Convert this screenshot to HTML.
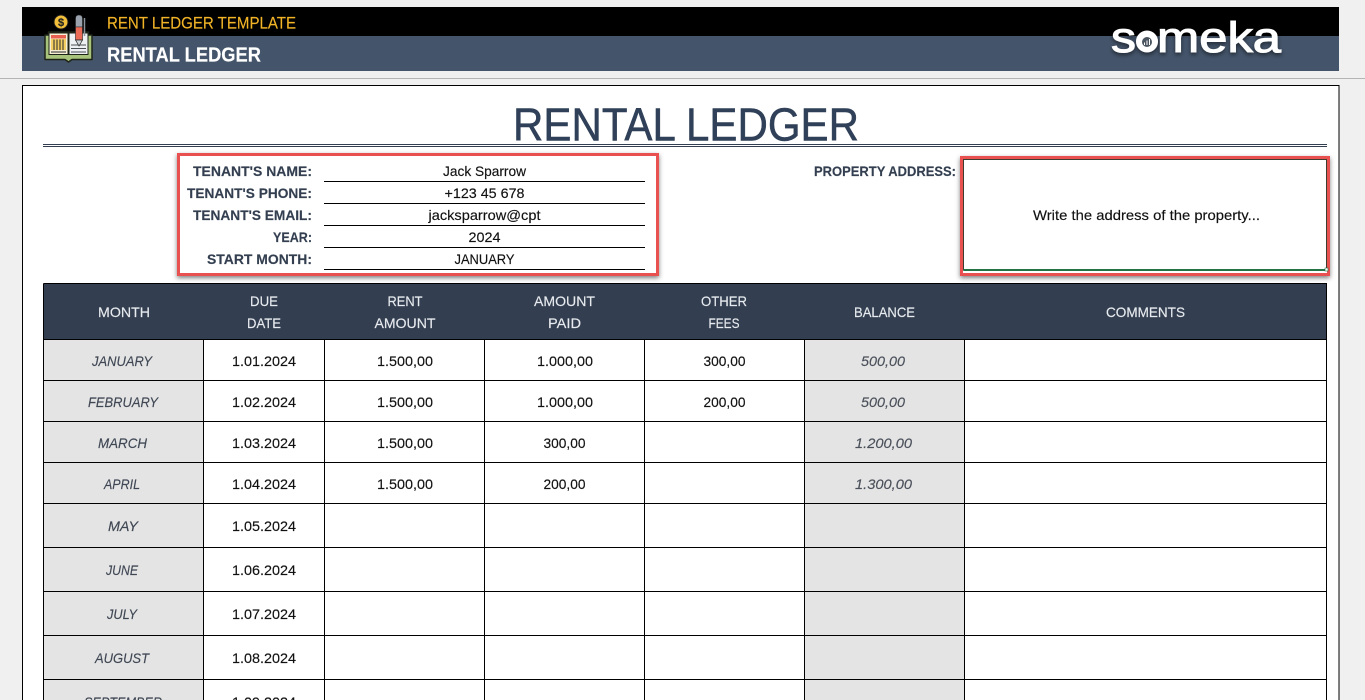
<!DOCTYPE html>
<html lang="en">
<head>
<meta charset="utf-8">
<title>Rental Ledger</title>
<style>
html,body{margin:0;padding:0;width:1365px;height:700px;overflow:hidden;background:#f0f0f0}
svg{display:block}
text{font-family:"Liberation Sans",sans-serif;font-size:14px;fill:#111;stroke:#111;stroke-width:.15px}
.m{text-anchor:middle}
.h{text-anchor:middle;fill:#e8ebef;stroke:#e8ebef;font-size:14px}
.mo{text-anchor:middle;font-style:italic;fill:#3f4754;stroke:#3f4754}
.b{text-anchor:middle;font-style:italic;fill:#4a505a;stroke:#4a505a}
.l{font-weight:bold;fill:#333f50;stroke:#333f50;font-size:14px}
</style>
</head>
<body>
<svg width="1365" height="700" viewBox="0 0 1365 700" xmlns="http://www.w3.org/2000/svg">
<defs>
<filter id="sh" x="-5%" y="-15%" width="110%" height="130%"><feDropShadow dx="0" dy="2" stdDeviation="2.500" flood-color="#000" flood-opacity=".5"/></filter>
<filter id="ls" x="-10%" y="-30%" width="120%" height="170%"><feDropShadow dx="0" dy="2" stdDeviation="2" flood-color="#000" flood-opacity=".55"/></filter>
</defs>
<rect width="1365" height="700" fill="#f0f0f0"/>

<!-- Header band -->
<rect x="22" y="7" width="1317" height="29" fill="#000"/>
<rect x="22" y="36" width="1317" height="35" fill="#44546a"/>
<rect x="0" y="78" width="1365" height="1" fill="#b4b4b4"/>
<text x="107" y="28.500" textLength="189" lengthAdjust="spacingAndGlyphs" style="font-size:17px;fill:#f2b427;stroke:#f2b427">RENT LEDGER TEMPLATE</text>
<text x="107" y="61.500" textLength="154" lengthAdjust="spacingAndGlyphs" style="font-size:20px;font-weight:bold;fill:#fff;stroke:#fff">RENTAL LEDGER</text>

<!-- Book icon -->
<g>
<path d="M45 35H48.500V32H88.500V35H92V59.500H72L68.500 62 65 59.500H45Z" fill="#a8c47c" stroke="#1e2418" stroke-width="1.500" stroke-linejoin="round"/>
<rect x="49" y="33" width="19" height="21.500" fill="#f6efd6" stroke="#1e2418" stroke-width="1"/>
<rect x="69" y="33" width="19" height="21.500" fill="#eef1f3" stroke="#1e2418" stroke-width="1"/>
<rect x="51" y="35" width="15" height="3.500" fill="#e8604f"/>
<rect x="51" y="39" width="15" height="11" fill="#f3cf63"/>
<path d="M54 39.500V50M57 39.500V50M60 39.500V50M63 39.500V50M51 52H66" stroke="#2a2a2a" stroke-width="1"/>
<path d="M71 45H86M71 48.500H86M71 52H86" stroke="#4a4f55" stroke-width="1"/>
<circle cx="61" cy="22" r="7" fill="#f3bf3a" stroke="#1b1b1b" stroke-width="1"/>
<text x="61" y="26" class="m" style="font-size:11px;font-weight:bold;fill:#222;stroke:#222">$</text>
<path d="M75.500 18.500Q75.500 15 79 15Q82.500 15 82.500 18.500V27H75.500Z" fill="#9aa3ad" stroke="#222" stroke-width=".6"/>
<path d="M75.500 27H82.500V40H75.500Z" fill="#ea6a56" stroke="#222" stroke-width=".6"/>
<path d="M75.500 40H82.500L79 46Z" fill="#cfd4d8" stroke="#222" stroke-width=".7"/>
<path d="M84.500 18V36" stroke="#8a929b" stroke-width="1.500"/>
</g>

<!-- Someka logo -->
<g filter="url(#ls)">
<text x="1111" y="52" textLength="25" lengthAdjust="spacingAndGlyphs" style="font-size:43px;fill:#fff;stroke:#fff;stroke-width:1px">s</text>
<circle cx="1147" cy="41.500" r="11" fill="#fff"/>
<text x="1157" y="52" textLength="124" lengthAdjust="spacingAndGlyphs" style="font-size:43px;fill:#fff;stroke:#fff;stroke-width:1px">meka</text>
</g>
<circle cx="1147" cy="42" r="5" fill="#4a5560"/>
<path d="M1144.500 45V42.500M1147 45V40.500M1149.500 45V39" stroke="#fff" stroke-width="1"/>

<!-- Sheet -->
<rect x="22.500" y="85.500" width="1316.500" height="640" fill="#fff" stroke="#000" stroke-width="1"/>
<text x="513" y="140.500" textLength="346" lengthAdjust="spacingAndGlyphs" style="font-size:46px;fill:#2f4058;stroke:#2f4058;stroke-width:.5px">RENTAL LEDGER</text>
<rect x="43" y="144" width="1284" height="1" fill="#333f50"/>
<rect x="43" y="146" width="1284" height="1" fill="#333f50"/>

<!-- Tenant form -->
<rect x="178.500" y="154.500" width="479" height="120" fill="#fff" stroke="#e8514f" stroke-width="3" filter="url(#sh)"/>
<text x="193" y="176" textLength="119" lengthAdjust="spacingAndGlyphs" class="l">TENANT'S NAME:</text>
<text x="187" y="198" textLength="125" lengthAdjust="spacingAndGlyphs" class="l">TENANT'S PHONE:</text>
<text x="193" y="220" textLength="119" lengthAdjust="spacingAndGlyphs" class="l">TENANT'S EMAIL:</text>
<text x="273" y="242" textLength="39" lengthAdjust="spacingAndGlyphs" class="l">YEAR:</text>
<text x="207" y="264" textLength="105" lengthAdjust="spacingAndGlyphs" class="l">START MONTH:</text>
<path d="M324 181.500H645M324 203.500H645M324 225.500H645M324 247.500H645M324 269.500H645" stroke="#000" stroke-width="1"/>
<text x="484.500" y="176" class="m" textLength="83" lengthAdjust="spacingAndGlyphs">Jack Sparrow</text>
<text x="484.500" y="198" class="m" textLength="80" lengthAdjust="spacingAndGlyphs">+123 45 678</text>
<text x="484.500" y="220" class="m" textLength="112" lengthAdjust="spacingAndGlyphs">jacksparrow@cpt</text>
<text x="484.500" y="242" class="m" textLength="32" lengthAdjust="spacingAndGlyphs">2024</text>
<text x="484.500" y="264" class="m" textLength="60" lengthAdjust="spacingAndGlyphs">JANUARY</text>

<!-- Property address -->
<text x="814" y="176" textLength="142" lengthAdjust="spacingAndGlyphs" class="l">PROPERTY ADDRESS:</text>
<rect x="961.500" y="157.500" width="367" height="117" fill="#fff" stroke="#e8514f" stroke-width="3" filter="url(#sh)"/>
<rect x="963.500" y="159.500" width="363" height="110.500" fill="#fff" stroke="#3d3d2f" stroke-width="1"/>
<rect x="963.500" y="269" width="364" height="2" fill="#217346"/>
<rect x="1325" y="268" width="3" height="3" fill="#fff" stroke="#217346" stroke-width=".6"/>
<text x="1146.500" y="220" class="m" textLength="227" lengthAdjust="spacingAndGlyphs">Write the address of the property...</text>

<!-- Table -->
<rect x="43" y="284" width="1284" height="56" fill="#333f50"/>
<rect x="43" y="340" width="160" height="360" fill="#e4e4e4"/>
<rect x="804" y="340" width="160" height="360" fill="#e4e4e4"/>
<path d="M43.500 283.500H1326.500V700M43.500 283.500V700" fill="none" stroke="#000" stroke-width="1"/>
<path d="M43 339.500H1327M43 380.500H1327M43 421.500H1327M43 462.500H1327M43 503.500H1327M43 547.500H1327M43 591.500H1327M43 635.500H1327M43 679.500H1327" stroke="#000" stroke-width="1"/>
<path d="M203.500 340V700M324.500 340V700M484.500 340V700M644.500 340V700M804.500 340V700M964.500 340V700" stroke="#000" stroke-width="1"/>

<text x="124" y="317" class="h" textLength="52" lengthAdjust="spacingAndGlyphs">MONTH</text>
<text x="264" y="306" class="h" textLength="28" lengthAdjust="spacingAndGlyphs">DUE</text>
<text x="264" y="328" class="h" textLength="34" lengthAdjust="spacingAndGlyphs">DATE</text>
<text x="405" y="306" class="h" textLength="35" lengthAdjust="spacingAndGlyphs">RENT</text>
<text x="405" y="328" class="h" textLength="61" lengthAdjust="spacingAndGlyphs">AMOUNT</text>
<text x="564.500" y="306" class="h" textLength="61" lengthAdjust="spacingAndGlyphs">AMOUNT</text>
<text x="564.500" y="328" class="h" textLength="33" lengthAdjust="spacingAndGlyphs">PAID</text>
<text x="724" y="306" class="h" textLength="46" lengthAdjust="spacingAndGlyphs">OTHER</text>
<text x="724" y="328" class="h" textLength="31" lengthAdjust="spacingAndGlyphs">FEES</text>
<text x="884.500" y="317" class="h" textLength="61" lengthAdjust="spacingAndGlyphs">BALANCE</text>
<text x="1145.500" y="317" class="h" textLength="79" lengthAdjust="spacingAndGlyphs">COMMENTS</text>

<text x="122" y="366" class="mo" textLength="60" lengthAdjust="spacingAndGlyphs">JANUARY</text>
<text x="123" y="407" class="mo" textLength="70" lengthAdjust="spacingAndGlyphs">FEBRUARY</text>
<text x="122.500" y="448" class="mo" textLength="49" lengthAdjust="spacingAndGlyphs">MARCH</text>
<text x="122" y="489" class="mo" textLength="36" lengthAdjust="spacingAndGlyphs">APRIL</text>
<text x="123" y="531" class="mo" textLength="30" lengthAdjust="spacingAndGlyphs">MAY</text>
<text x="122" y="575" class="mo" textLength="32" lengthAdjust="spacingAndGlyphs">JUNE</text>
<text x="122" y="619" class="mo" textLength="30" lengthAdjust="spacingAndGlyphs">JULY</text>
<text x="122" y="663" class="mo" textLength="54" lengthAdjust="spacingAndGlyphs">AUGUST</text>
<text x="123" y="707" class="mo" textLength="78" lengthAdjust="spacingAndGlyphs">SEPTEMBER</text>

<text x="264" y="366" class="m" textLength="64" lengthAdjust="spacingAndGlyphs">1.01.2024</text>
<text x="264" y="407" class="m" textLength="64" lengthAdjust="spacingAndGlyphs">1.02.2024</text>
<text x="264" y="448" class="m" textLength="64" lengthAdjust="spacingAndGlyphs">1.03.2024</text>
<text x="264" y="489" class="m" textLength="64" lengthAdjust="spacingAndGlyphs">1.04.2024</text>
<text x="264" y="531" class="m" textLength="64" lengthAdjust="spacingAndGlyphs">1.05.2024</text>
<text x="264" y="575" class="m" textLength="64" lengthAdjust="spacingAndGlyphs">1.06.2024</text>
<text x="264" y="619" class="m" textLength="64" lengthAdjust="spacingAndGlyphs">1.07.2024</text>
<text x="264" y="663" class="m" textLength="64" lengthAdjust="spacingAndGlyphs">1.08.2024</text>
<text x="264" y="707" class="m" textLength="64" lengthAdjust="spacingAndGlyphs">1.09.2024</text>

<text x="405" y="366" class="m" textLength="56" lengthAdjust="spacingAndGlyphs">1.500,00</text>
<text x="405" y="407" class="m" textLength="56" lengthAdjust="spacingAndGlyphs">1.500,00</text>
<text x="405" y="448" class="m" textLength="56" lengthAdjust="spacingAndGlyphs">1.500,00</text>
<text x="405" y="489" class="m" textLength="56" lengthAdjust="spacingAndGlyphs">1.500,00</text>

<text x="565" y="366" class="m" textLength="56" lengthAdjust="spacingAndGlyphs">1.000,00</text>
<text x="565" y="407" class="m" textLength="56" lengthAdjust="spacingAndGlyphs">1.000,00</text>
<text x="564.500" y="448" class="m" textLength="42" lengthAdjust="spacingAndGlyphs">300,00</text>
<text x="564.500" y="489" class="m" textLength="42" lengthAdjust="spacingAndGlyphs">200,00</text>

<text x="724.500" y="366" class="m" textLength="42" lengthAdjust="spacingAndGlyphs">300,00</text>
<text x="724.500" y="407" class="m" textLength="42" lengthAdjust="spacingAndGlyphs">200,00</text>

<text x="883" y="366" class="b" textLength="44" lengthAdjust="spacingAndGlyphs">500,00</text>
<text x="883" y="407" class="b" textLength="44" lengthAdjust="spacingAndGlyphs">500,00</text>
<text x="883.500" y="448" class="b" textLength="57" lengthAdjust="spacingAndGlyphs">1.200,00</text>
<text x="883.500" y="489" class="b" textLength="57" lengthAdjust="spacingAndGlyphs">1.300,00</text>
</svg>
</body>
</html>
